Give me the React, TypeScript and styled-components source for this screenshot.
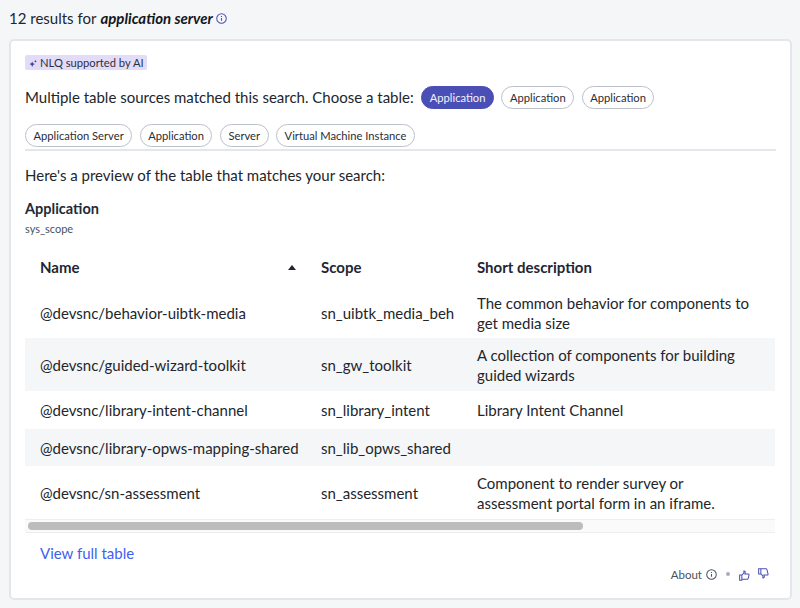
import React from "react";
import styled, { createGlobalStyle } from "styled-components";

const GlobalStyle = createGlobalStyle`
  html, body {
    margin: 0;
    padding: 0;
    background: #f5f6f8;
    font-family: Lato, "Open Sans", sans-serif;
    color: #1f2733;
  }
`;

const Page = styled.div`
  width: 800px;
  height: 608px;
  box-sizing: border-box;
  padding: 8px 9px;
  overflow: hidden;
`;

const Heading = styled.div`
  display: flex;
  align-items: center;
  height: 19px;
  margin-bottom: 12px;
  font-size: 15px;
  color: #22262c;

  b {
    font-style: italic;
    font-weight: 700;
    margin-left: 4px;
    color: #14171c;
  }

  svg {
    margin-left: 3px;
    margin-top: 1px;
  }
`;

const Card = styled.div`
  box-sizing: border-box;
  width: 783px;
  height: 561px;
  background: #fff;
  border: 2px solid #e5e6ec;
  border-radius: 5px;
  padding: 14px 14px 0 14px;
`;

const AiBadge = styled.div`
  display: flex;
  align-items: center;
  gap: 3px;
  width: fit-content;
  height: 15px;
  padding: 0 3px 0 4px;
  background: #e3dcf8;
  border-radius: 2px;
  font-size: 11.2px;
  color: #2c3040;
`;

const SourceRow = styled.div`
  display: flex;
  align-items: center;
  height: 24px;
  margin-top: 15px;
  gap: 7.5px;
  font-size: 15px;
  color: #22262c;
`;

const ChipRow = styled.div`
  display: flex;
  align-items: center;
  gap: 7.5px;
  margin-top: 15px;
  padding-bottom: 2px;
  border-bottom: 2px solid #e5e6ec;
`;

const Chip = styled.span<{ $active?: boolean }>`
  box-sizing: border-box;
  display: inline-flex;
  align-items: center;
  height: 23px;
  padding: 0 7.5px;
  border-radius: 12px;
  font-size: 11.2px;
  color: ${(p) => (p.$active ? "#f2f1fb" : "#2a2e36")};
  background: ${(p) => (p.$active ? "#4a4fb5" : "#fff")};
  border: 1px solid ${(p) => (p.$active ? "#4a4fb5" : "#bcc0ca")};
`;

const Preview = styled.p`
  margin: 14px 0 0;
  font-size: 15px;
  line-height: 20px;
  color: #22262c;
`;

const TableTitle = styled.div`
  margin-top: 15px;
  font-size: 14.5px;
  line-height: 18px;
  font-weight: 700;
  color: #222a38;
`;

const TableSub = styled.div`
  margin-top: 4px;
  font-size: 11px;
  line-height: 14px;
  color: #4a5260;
`;

const TableWrap = styled.div`
  margin-top: 10px;
  width: 750px;
  overflow: hidden;
`;

const Table = styled.table`
  width: 750px;
  table-layout: fixed;
  border-collapse: collapse;
  font-size: 15px;
  color: #22262c;
`;

const Th = styled.th<{ $w: number }>`
  width: ${(p) => p.$w}px;
  box-sizing: border-box;
  height: 42px;
  padding: 0 15px;
  text-align: left;
  font-size: 15px;
  font-weight: 700;
  color: #1f2733;
`;

const NameTh = styled(Th)`
  padding-right: 10px;
`;

const HeadInner = styled.div`
  display: flex;
  align-items: center;
  justify-content: space-between;
`;

const SortUp = styled.span`
  width: 0;
  height: 0;
  border-left: 4px solid transparent;
  border-right: 4px solid transparent;
  border-bottom: 5px solid #1f2733;
`;

const Row = styled.tr<{ $h: number; $alt?: boolean }>`
  height: ${(p) => p.$h}px;
  background: ${(p) => (p.$alt ? "#f5f6f8" : "#fff")};
`;

const Td = styled.td`
  padding: 0 15px;
  line-height: 20px;
  vertical-align: middle;
  white-space: nowrap;
`;

const DescCell = styled(Td)`
  padding-right: 24px;
  white-space: normal;
`;

const ScrollTrack = styled.div`
  box-sizing: border-box;
  width: 750px;
  height: 14px;
  padding: 2px 3px;
  background: #fafafa;
  border-top: 1px solid #eeeeee;
  border-bottom: 1px solid #eeeeee;
`;

const ScrollThumb = styled.div`
  width: 555px;
  height: 8px;
  border-radius: 4px;
  background: #bcbcbc;
`;

const ViewLink = styled.a`
  display: block;
  margin: 10px 0 0 15px;
  font-size: 15px;
  line-height: 20px;
  color: #3f5ff0;
  text-decoration: none;
`;

const Footer = styled.div`
  display: flex;
  align-items: center;
  justify-content: flex-end;
  margin-top: 1px;
  padding-right: 7px;
  height: 20px;
  font-size: 11.5px;
  color: #4a5260;
`;

const AboutIcon = styled.span`
  display: flex;
  margin-left: 4px;
`;

const Dot = styled.span`
  width: 4px;
  height: 4px;
  margin: 0 9px;
  border-radius: 50%;
  background: #a9aebc;
`;

const ThumbIcon = styled.svg<{ $up?: boolean }>`
  margin-left: ${(p) => (p.$up ? "0" : "8px")};
  margin-top: ${(p) => (p.$up ? "2px" : "-2px")};
`;

const InfoCircle = ({ color, size }: { color: string; size: number }) => (
  <svg width={size} height={size} viewBox="0 0 12 12" fill="none" stroke={color}>
    <circle cx="6" cy="6" r="5.2" strokeWidth="1.1" />
    <path d="M6 5.4v3M6 3.4v.9" strokeWidth="1.2" />
  </svg>
);

const rows = [
  { name: "@devsnc/behavior-uibtk-media", scope: "sn_uibtk_media_beh", desc: "The common behavior for components to get media size", h: 50 },
  { name: "@devsnc/guided-wizard-toolkit", scope: "sn_gw_toolkit", desc: "A collection of components for building guided wizards", h: 53, alt: true },
  { name: "@devsnc/library-intent-channel", scope: "sn_library_intent", desc: "Library Intent Channel", h: 38 },
  { name: "@devsnc/library-opws-mapping-shared", scope: "sn_lib_opws_shared", desc: "", h: 37, alt: true },
  { name: "@devsnc/sn-assessment", scope: "sn_assessment", desc: "Component to render survey or assessment portal form in an iframe.", h: 53 },
];

const App: React.FC = () => {
  return (
    <Page>
      <GlobalStyle />
      <Heading>
        12 results for <b>application server</b>
        <InfoCircle color="#4a4fb5" size={11} />
      </Heading>
      <Card>
        <AiBadge>
          <svg width="8" height="8" viewBox="0 0 10 10" fill="#3b3f9e">
            <path d="M4 3l1 2.4L7.4 6.4 5 7.4 4 10 3 7.4.6 6.4 3 5.4zM8 1l.5 1.2L9.7 3l-1.2.5L8 4.7l-.5-1.2L6.3 3l1.2-.8z" />
          </svg>
          NLQ supported by AI
        </AiBadge>
        <SourceRow>
          <span>Multiple table sources matched this search. Choose a table:</span>
          <Chip $active>Application</Chip>
          <Chip>Application</Chip>
          <Chip>Application</Chip>
        </SourceRow>
        <ChipRow>
          <Chip>Application Server</Chip>
          <Chip>Application</Chip>
          <Chip>Server</Chip>
          <Chip>Virtual Machine Instance</Chip>
        </ChipRow>
        <Preview>Here's a preview of the table that matches your search:</Preview>
        <TableTitle>Application</TableTitle>
        <TableSub>sys_scope</TableSub>
        <TableWrap>
          <Table>
            <thead>
              <tr>
                <NameTh $w={281}>
                  <HeadInner>
                    Name
                    <SortUp />
                  </HeadInner>
                </NameTh>
                <Th $w={156}>Scope</Th>
                <Th $w={313}>Short description</Th>
              </tr>
            </thead>
            <tbody>
              {rows.map((r) => (
                <Row key={r.name} $h={r.h} $alt={r.alt}>
                  <Td>{r.name}</Td>
                  <Td>{r.scope}</Td>
                  <DescCell>{r.desc}</DescCell>
                </Row>
              ))}
            </tbody>
          </Table>
          <ScrollTrack>
            <ScrollThumb />
          </ScrollTrack>
        </TableWrap>
        <ViewLink href="#">View full table</ViewLink>
        <Footer>
          About
          <AboutIcon>
            <InfoCircle color="#4a5260" size={11} />
          </AboutIcon>
          <Dot />
          <ThumbIcon $up width="11" height="11" viewBox="0 0 12 12" fill="none" stroke="#4a4fb5" strokeWidth="1.1">
            <path d="M.7 5.5h2.4v5.6H.7zM3.1 5.5l2.2-2.2V1.2c1-.3 1.8.5 1.5 1.6l-.4 1.5h3.7c.8 0 1 .7.8 1.3l-1 4c-.2.4-.4.5-.9.5H3.1" />
          </ThumbIcon>
          <ThumbIcon width="11" height="11" viewBox="0 0 12 12" fill="none" stroke="#4a4fb5" strokeWidth="1.1">
            <path d="M.7 6.5h2.4V.9H.7zM3.1 6.5l2.2 2.2v2.1c1 .3 1.8-.5 1.5-1.6l-.4-1.5h3.7c.8 0 1-.7.8-1.3l-1-4C9.7 1 9.5.9 9 .9H3.1" />
          </ThumbIcon>
        </Footer>
      </Card>
    </Page>
  );
};

export default App;
